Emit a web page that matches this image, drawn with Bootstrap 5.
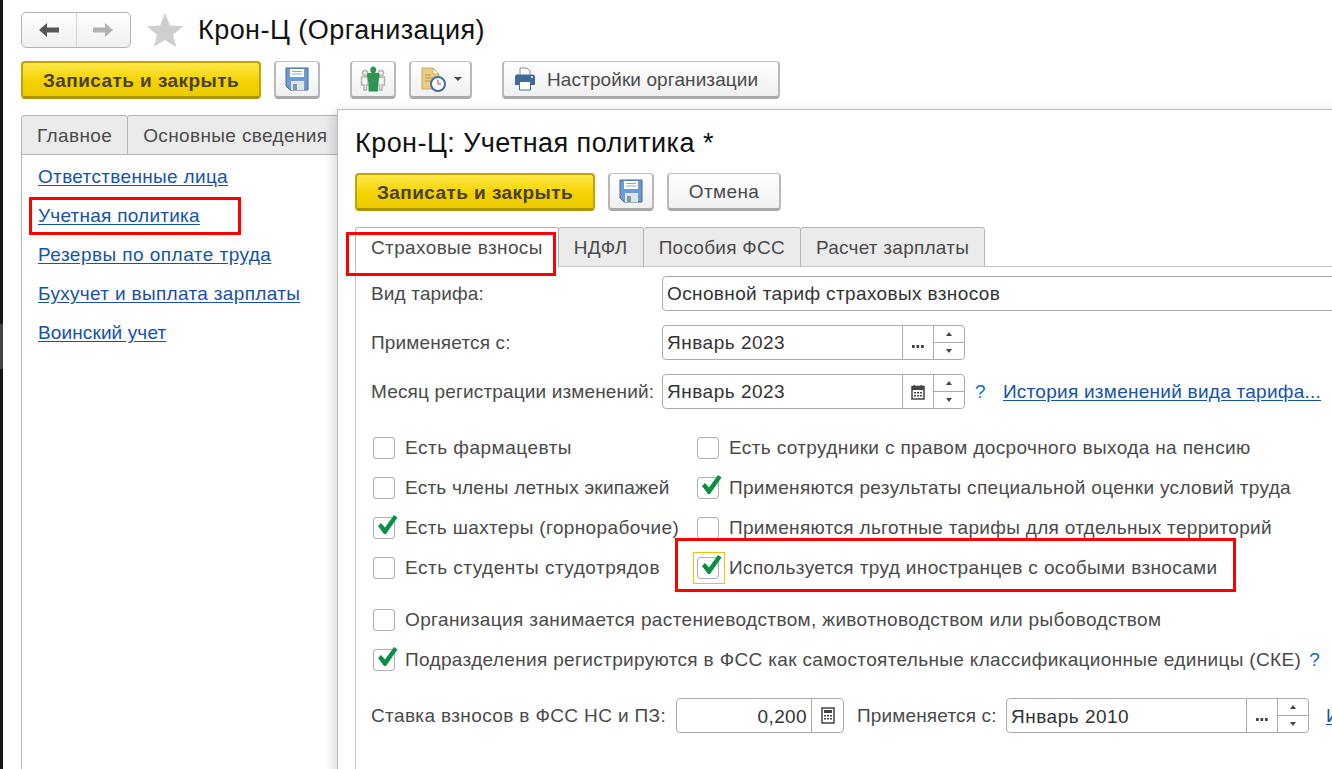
<!DOCTYPE html>
<html lang="ru">
<head>
<meta charset="utf-8">
<title>Крон-Ц</title>
<link href="https://cdn.jsdelivr.net/npm/bootstrap@5.3.0/dist/css/bootstrap.min.css" rel="stylesheet">
<style>
html,body{height:769px;overflow:hidden;background:#fff}
body{font-family:"Liberation Sans",Arial,sans-serif;font-size:19px;line-height:22px;color:#4a4a4a;letter-spacing:.37px;position:relative}
.edge{position:absolute;left:0;top:0;bottom:0;width:3px;background:linear-gradient(#161616 0 324px,#444 324px 369px,#161616 369px)}
.page{padding:12px 0 0 21px}
.hdr{height:36px}
.navgrp{width:110px;height:36px;border:1px solid #b5b5b5;border-radius:5px;background:linear-gradient(#fff,#efefef)}
.navgrp span{flex:1;display:flex;align-items:center;justify-content:center}
.navgrp span+span{border-left:1px solid #d5d5d5}
.star{margin-left:16px;margin-right:15px}
.ttl{font-size:27px;line-height:36px;color:#111;font-weight:400;margin:0;letter-spacing:.45px}
.tb{height:38px;margin-top:13px}
.tb2{height:38px;margin-top:12px}
.b1c{box-sizing:border-box;height:38px;border-radius:4px;border:1px solid #c4c4c4;border-bottom:3px solid #a9a9a9;border-left:2px solid #b9b9b9;border-right:2px solid #b9b9b9;background:linear-gradient(#fff,#f0f0f0);display:flex;align-items:center;justify-content:center;color:#4a4a4a;padding:0;letter-spacing:.37px}
.b1c>span.txt,.ybtn,.txtbtn{padding-top:2px}
.ybtn{width:240px;border:2px solid #c2a500;border-bottom:3px solid #ac9300;background:linear-gradient(#ffe84a,#f3d200 55%,#eccb00);font-weight:700;color:#4a4024;letter-spacing:.43px}
.ico{width:46px}
.gapl13{margin-left:13px}
.gapl30{margin-left:30px}
.tabset{height:40px;margin-top:16px}
.tabz{box-sizing:border-box;background:#ebebeb;border:1px solid #b5b5b5;border-radius:3px 3px 0 0;padding:2px 15px 0;display:flex;align-items:center;height:40px;margin-right:-1px;color:#4a4a4a;white-space:nowrap}
.tabz.on{background:#fff;border-bottom-color:#fff;position:relative;z-index:1}
.side{border-left:1px solid #b5b5b5;border-top:1px solid #b5b5b5;height:616px;margin-top:-1px;padding:11px 0 0 16px;display:flex;flex-direction:column;gap:17px}
.side a,.lnk{color:#1552a8;text-decoration:underline;text-underline-offset:2px}
.side a{letter-spacing:.33px}
.side a.ls24{letter-spacing:.24px}
.side a.ls46{letter-spacing:.46px}
.side a.ls12{letter-spacing:.12px}
.redbox{position:absolute;border:3px solid #f00;z-index:5;pointer-events:none}
.win{position:absolute;left:337px;top:109px;width:1100px;height:700px;background:#fff;border:1px solid #bdbdbd;box-shadow:-3px 3px 12px rgba(0,0,0,.16);padding:15px 0 0 17px;z-index:3}
.win .tabset{margin-top:16px}
.wbody{border-left:1px solid #c4c4c4;border-top:1px solid #c4c4c4;margin-top:-1px;padding:9px 0 0 15px;height:520px;position:relative}
.frow{display:flex;align-items:center;height:35px;margin-bottom:14px}
.lab{width:291px;flex:none;letter-spacing:.15px}
.fld{box-sizing:border-box;height:35px;border:1px solid #ababab;border-radius:4px;display:flex;align-items:stretch;background:#fff;color:#333;flex:none}
.fld>.val{flex:1;padding:0 4px;height:33px;line-height:33px}
.tval{letter-spacing:.5px}
.fld>.ib{width:31px;border-left:1px solid #ababab;display:flex;align-items:center;justify-content:center}
.spin{width:31px;border-left:1px solid #ababab;display:flex;flex-direction:column}
.spin i{flex:1;display:flex;align-items:center;justify-content:center}
.spin i+i{border-top:1px solid #ababab}
.tri-u{width:0;height:0;border:3px solid transparent;border-top:0;border-bottom:4px solid #444}
.tri-d{width:0;height:0;border:3px solid transparent;border-bottom:0;border-top:4px solid #444}
.dots{width:13px;height:3px;background:radial-gradient(circle at 1.5px 1.5px,#444 1.5px,transparent 1.6px) 0 0/4.5px 3px repeat-x;margin-top:8px}
.q{color:#0f6eb5;font-weight:400}
.chkgrid{display:grid;grid-template-columns:324px auto;row-gap:18px;margin-top:28px;margin-left:2px}
.ck{display:flex;align-items:center;height:22px;white-space:nowrap}
.ck.ls22{letter-spacing:.22px}
.ck.ls32{letter-spacing:.32px}
.ck.ls34{letter-spacing:.34px}
.ck.ls50{letter-spacing:.5px}
.cbx{box-sizing:border-box;width:22px;height:22px;border:1px solid #b0b0b0;border-radius:3px;background:#fff;margin-right:10px;flex:none;position:relative}
.cbx svg{position:absolute;left:1px;top:-5px}
.focusring::after{content:"";position:absolute;left:-5px;top:-6px;width:32px;height:32px;border:1px solid #f2c200}
.chk2{margin-left:2px;margin-top:30px;display:flex;flex-direction:column;gap:18px}
.rowlast{display:flex;align-items:center;height:35px;margin-top:27px;white-space:nowrap}
.rowlast .lbl1{width:305px;padding-top:1px}
.rowlast .lbl2{margin-left:13px;width:149px;letter-spacing:.15px;padding-top:1px}
.rowlast .fld>.val{line-height:35px}
.caret-d{width:0;height:0;border:4px solid transparent;border-bottom:0;border-top:4px solid #4a4a4a}
.setbtn{width:278px;gap:10px;justify-content:flex-start;padding-left:9px;letter-spacing:.1px}
.lnkhist{letter-spacing:.26px}
.tabtight{letter-spacing:.25px}
</style>
</head>
<body>
<div class="edge"></div>
<div class="page">
  <div class="hdr d-flex align-items-center">
    <div class="navgrp d-flex">
      <span><svg width="22" height="16" viewBox="0 0 22 16"><path d="M1 8l8-7v4.500h12v5H9V15z" fill="#555"/></svg></span>
      <span><svg width="22" height="16" viewBox="0 0 22 16"><path d="M21 8l-8-7v4.500H1v5h12V15z" fill="#b2b2b2"/></svg></span>
    </div>
    <svg class="star" width="36" height="34" viewBox="0 0 36 34"><path d="M18 0l5 12.500 13 .8-10 8.400 3.300 12.300L18 27l-11.300 7L10 21.700 0 13.300l13-.8z" fill="#cfcfcf"/></svg>
    <h1 class="ttl">Крон-Ц (Организация)</h1>
  </div>
  <div class="tb d-flex align-items-center">
    <button class="b1c ybtn" type="button">Записать и закрыть</button>
    <button class="b1c ico gapl13" type="button"><svg width="24" height="24" viewBox="0 0 24 24"><use href="#floppy"/></svg></button>
    <button class="b1c ico gapl30" type="button"><svg width="26" height="26" viewBox="0 0 26 26"><g fill="none" stroke="#b4b4b4" stroke-width="1.500"><circle cx="5" cy="7" r="2.500"/><path d="M1.500 11H8v8H6.500v5H4v-5H1.500zM18 11h6.500v8H22v5h-2.500v-5H18z"/><circle cx="21" cy="7" r="2.500"/></g><path d="M13 0.500q3.200 0 3.200 3.500 0 2-1.200 3h4l.5 3-1.500 7.500V25.500H8.500V17L7 10l.500-3h4q-1.200-1-1.200-3 0-3.500 2.700-3.500z" fill="#2e9651"/></svg></button>
    <button class="b1c gapl13" type="button" style="width:63px"><svg width="26" height="26" viewBox="0 0 26 26"><path d="M2 2h11l6 6v15H2z" fill="#e8cd83" stroke="#c9a95a"/><path d="M13 2v6h6z" fill="#fff" stroke="#c9a95a"/><path d="M5 9h6M5 12h8M5 15h6" stroke="#b99a4e"/><circle cx="18" cy="18" r="7" fill="#fff" stroke="#3e6ea5" stroke-width="2"/><path d="M18 13.500V18h3" stroke="#d33" fill="none"/></svg><span class="caret-d ms-2"></span></button>
    <button class="b1c setbtn gapl30" type="button"><svg width="24" height="24" viewBox="0 0 24 24"><path d="M7 1h7l3 3v6H7z" fill="#fff" stroke="#8a8a8a"/><path d="M2 9.500q0-2 2-2h16q2 0 2 2V18h-4v-3H6v3H2z" fill="#3f6c96"/><path d="M6.500 14.500h11V23h-11z" fill="#fff" stroke="#3f6c96"/><circle cx="19" cy="10" r="1" fill="#fff"/></svg><span class="txt">Настройки организации</span></button>
  </div>
  <div class="tabset d-flex">
    <div class="tabz">Главное</div>
    <div class="tabz">Основные сведения</div>
  </div>
  <div class="side">
    <a href="#">Ответственные лица</a>
    <a href="#" class="ls24">Учетная политика</a>
    <a href="#" class="ls46">Резервы по оплате труда</a>
    <a href="#">Бухучет и выплата зарплаты</a>
    <a href="#" class="ls12">Воинский учет</a>
  </div>
</div>

<div class="win">
  <h2 class="ttl">Крон-Ц: Учетная политика *</h2>
  <div class="tb2 d-flex align-items-center">
    <button class="b1c ybtn" type="button">Записать и закрыть</button>
    <button class="b1c ico gapl13" type="button"><svg width="24" height="24" viewBox="0 0 24 24"><use href="#floppy"/></svg></button>
    <button class="b1c gapl13 txtbtn" type="button" style="width:114px">Отмена</button>
  </div>
  <div class="tabset d-flex">
    <div class="tabz on">Страховые взносы</div>
    <div class="tabz">НДФЛ</div>
    <div class="tabz tabtight">Пособия ФСС</div>
    <div class="tabz tabtight">Расчет зарплаты</div>
  </div>
  <div class="wbody">
    <div class="frow"><span class="lab">Вид тарифа:</span><div class="fld" style="width:900px"><span class="val">Основной тариф страховых взносов</span></div></div>
    <div class="frow"><span class="lab">Применяется с:</span><div class="fld" style="width:303px"><span class="val tval">Январь 2023</span><span class="ib"><span class="dots"></span></span><span class="spin"><i><b class="tri-u"></b></i><i><b class="tri-d"></b></i></span></div></div>
    <div class="frow"><span class="lab">Месяц регистрации изменений:</span><div class="fld" style="width:303px"><span class="val tval">Январь 2023</span><span class="ib"><svg width="14" height="16" viewBox="0 0 14 16"><path d="M1 2.500h12V15H1z" fill="#fff" stroke="#444" stroke-width="1.500"/><path d="M1 2.500h12V6H1z" fill="#444"/><path d="M3.500 1v3M10.500 1v3" stroke="#444" stroke-width="1.500"/><path d="M3 8h2v1.500H3zM6 8h2v1.500H6zM9 8h2v1.500H9zM3 11h2v1.500H3zM6 11h2v1.500H6zM9 11h2v1.500H9z" fill="#444"/></svg></span><span class="spin"><i><b class="tri-u"></b></i><i><b class="tri-d"></b></i></span></div><span class="q" style="margin-left:10px">?</span><a href="#" class="lnk lnkhist" style="margin-left:17px">История изменений вида тарифа...</a></div>
    <div class="chkgrid">
      <div class="ck ls50"><span class="cbx"></span>Есть фармацевты</div>
      <div class="ck"><span class="cbx"></span>Есть сотрудники с правом досрочного выхода на пенсию</div>
      <div class="ck ls22"><span class="cbx"></span>Есть члены летных экипажей</div>
      <div class="ck ls32"><span class="cbx"><svg width="24" height="24" viewBox="0 0 24 24"><use href="#tick"/></svg></span>Применяются результаты специальной оценки условий труда</div>
      <div class="ck"><span class="cbx"><svg width="24" height="24" viewBox="0 0 24 24"><use href="#tick"/></svg></span>Есть шахтеры (горнорабочие)</div>
      <div class="ck ls32"><span class="cbx"></span>Применяются льготные тарифы для отдельных территорий</div>
      <div class="ck ls50"><span class="cbx"></span>Есть студенты студотрядов</div>
      <div class="ck"><span class="cbx focusring"><svg width="24" height="24" viewBox="0 0 24 24"><use href="#tick"/></svg></span>Используется труд иностранцев с особыми взносами</div>
    </div>
    <div class="chk2">
      <div class="ck"><span class="cbx"></span>Организация занимается растениеводством, животноводством или рыбоводством</div>
      <div class="ck ls34"><span class="cbx"><svg width="24" height="24" viewBox="0 0 24 24"><use href="#tick"/></svg></span>Подразделения регистрируются в ФСС как самостоятельные классификационные единицы (СКЕ)<span class="q ms-2">?</span></div>
    </div>
    <div class="rowlast">
      <span class="lbl1">Ставка взносов в ФСС НС и ПЗ:</span>
      <div class="fld" style="width:168px"><span class="val text-end">0,200</span><span class="ib" style="width:32px"><svg width="14" height="17" viewBox="0 0 14 17"><path d="M1 1h12v15H1z" fill="#fff" stroke="#444" stroke-width="1.500"/><path d="M3 3h8v3H3z" fill="#444"/><path d="M3 8h2v1.500H3zM6 8h2v1.500H6zM9 8h2v1.500H9zM3 11h2v1.500H3zM6 11h2v1.500H6zM9 11h2v1.500H9z" fill="#444"/></svg></span></div>
      <span class="lbl2">Применяется с:</span>
      <div class="fld" style="width:303px"><span class="val tval">Январь 2010</span><span class="ib"><span class="dots"></span></span><span class="spin"><i><b class="tri-u"></b></i><i><b class="tri-d"></b></i></span></div>
      <a href="#" class="lnk" style="margin-left:17px">История</a>
    </div>
  </div>
</div>

<div class="redbox" style="left:29px;top:197px;width:212px;height:38px"></div>
<div class="redbox" style="left:346px;top:232px;width:210px;height:44px"></div>
<div class="redbox" style="left:675px;top:538px;width:561px;height:54px"></div>

<svg width="0" height="0" class="position-absolute"><defs>
<g id="floppy"><path d="M1 1h22v22H5l-4-4z" fill="#6f9bd0" stroke="#3f6c9f"/><path d="M5 2h14v8H5z" fill="#fff"/><path d="M7 4.500h10M7 7h10" stroke="#8aa9cc"/><path d="M6 14h13v9H6z" fill="#dfe6ea"/><path d="M8 17h4v6H8z" fill="#7d97a8"/></g>
<path id="tick" d="M3 13l3-3 4 4.500L19 2l3.500 2.500L11 21h-2z" fill="#0b8f47"/>
</defs></svg>
</body>
</html>
